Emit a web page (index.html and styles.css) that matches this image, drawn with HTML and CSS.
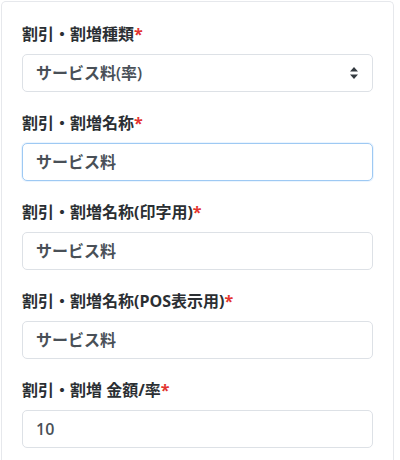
FILE: index.html
```html
<!DOCTYPE html>
<html lang="ja">
<head>
<meta charset="utf-8">
<link rel="stylesheet" href="styles.css">
</head>
<body>
<div class="card">
  <div class="card-body">
    <div class="form-group">
      <label class="label">割引・割増種類<span class="req">*</span></label>
      <div class="select">
        <span class="value">サービス料(率)</span>
        <svg class="caret" width="10" height="14" viewBox="0 0 10 14"><path d="M5 1 L9 5.5 H1 Z M5 13 L9 8.5 H1 Z" fill="#343a40"/></svg>
      </div>
    </div>
    <div class="form-group">
      <label class="label">割引・割増名称<span class="req">*</span></label>
      <div class="input focus">サービス料</div>
    </div>
    <div class="form-group">
      <label class="label">割引・割増名称(印字用)<span class="req">*</span></label>
      <div class="input">サービス料</div>
    </div>
    <div class="form-group">
      <label class="label">割引・割増名称(POS表示用)<span class="req">*</span></label>
      <div class="input">サービス料</div>
    </div>
    <div class="form-group">
      <label class="label">割引・割増 金額/率<span class="req">*</span></label>
      <div class="input">10</div>
    </div>
  </div>
</div>
</body>
</html>
```
FILE: styles.css
```css
* { box-sizing: border-box; }
html, body { margin: 0; padding: 0; background: #fff; }
body {
  padding: 1px 6px 0 1px;
  font-family: "Open Sans", "Noto Sans CJK JP", sans-serif;
  font-size: 16px;
  color: #212529;
}
.card {
  border: 1px solid #e6e8ec;
  border-bottom: none;
  border-radius: 5px 5px 0 0;
  height: 470px;
}
.card-body { padding: 20px 20px 0 20px; }
.form-group { margin-bottom: 19px; }
.label {
  display: block;
  font-weight: 700;
  line-height: 24px;
  margin-bottom: 8px;
  color: #2b2f33;
}
.req { color: #e3342f; }
.select, .input {
  height: 38px;
  border: 1px solid #dde1e6;
  border-radius: 5px;
  padding: 0 12px 0 13px;
  display: flex;
  align-items: center;
  color: #495057;
  font-weight: 600;
  line-height: 24px;
  background: #fff;
}
.select { justify-content: space-between; }
.caret { margin-right: 1px; }
.input.focus {
  border-color: #9ec9f3;
  box-shadow: 0 0 0 1px rgba(0, 123, 255, 0.08);
}
```
